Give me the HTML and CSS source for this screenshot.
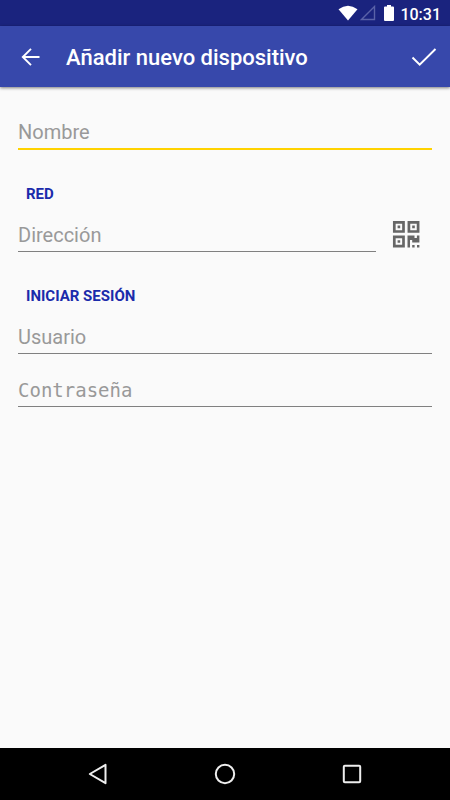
FILE: index.html
```
<!DOCTYPE html>
<html lang="es">
<head>
    <meta charset="UTF-8">
    <meta name="viewport" content="width=device-width, initial-scale=1.0">
    <title>Añadir nuevo dispositivo</title>
    <link rel="stylesheet" href="styles.css">
</head>
<body>
<div class="status">
    <svg width="20" height="16" viewBox="0 0 20 16"><path d="M10 15.5L0.5 4.2Q10 -2.8 19.5 4.2Z" fill="#fff"/></svg>
    <svg width="16" height="16" viewBox="0 0 16 16"><path d="M14.5 1.5V14.5H1.5Z" fill="none" stroke="#5a62a8" stroke-width="1.4"/></svg>
    <svg class="battery" width="10" height="16" viewBox="0 0 10 16"><path d="M3 0h4v1.500h2q1 0 1 1V15q0 1-1 1H1q-1 0-1-1V2.500q0-1 1-1h2z" fill="#fff"/></svg>
    <span class="time">10:31</span>
</div>
<form class="screen">
    <header class="toolbar">
        <button type="button" class="icon-btn" aria-label="Atrás">
            <svg width="20" height="20" viewBox="0 0 20 20"><path d="M18.500 10H2M10 1.800L1.800 10L10 18.200" fill="none" stroke="#fff" stroke-width="1.900"/></svg>
        </button>
        <h1>Añadir nuevo dispositivo</h1>
        <button type="submit" class="icon-btn" aria-label="Guardar">
            <svg width="26" height="20" viewBox="0 0 26 20"><path d="M1.500 10.500L8.700 17.700L24.500 2" fill="none" stroke="#fff" stroke-width="2"/></svg>
        </button>
    </header>
    <main class="content">
        <input type="text" class="field active" placeholder="Nombre" aria-label="Nombre">
        <h2>Red</h2>
        <div class="row">
            <input type="text" class="field" placeholder="Dirección" aria-label="Dirección">
            <button type="button" class="icon-btn" aria-label="Escanear código QR">
                <svg width="28" height="28" viewBox="0 0 28 28" fill="#666">
                    <g fill="none" stroke="#666" stroke-width="2.700">
                        <path d="M2.300 2.300h9.200v9.200H2.300zM16.900 2.300h9.200v9.200h-9.200zM2.300 16.900h9.200v9.200H2.300z"/>
                    </g>
                    <path d="M5.600 5.600h2.600v2.600H5.600zM20.200 5.600h2.600v2.600h-2.600zM5.600 20.200h2.600v2.600H5.600z"/>
                    <path d="M15.500 15.500h7v2.400h2.400v-2.400h2.500v7h-7.200v-2.400h-2.200v7.300h-2.500zM20.200 25h2.400v2.400h-2.400zM25 25h2.400v2.400H25z"/>
                </svg>
            </button>
        </div>
        <h2>Iniciar sesión</h2>
        <input type="text" class="field" placeholder="Usuario" aria-label="Usuario">
        <input type="password" class="field password" placeholder="Contraseña" aria-label="Contraseña">
    </main>
</form>
<nav class="navbar">
    <button type="button" aria-label="Atrás">
        <svg width="22" height="22" viewBox="0 0 22 22"><path d="M18.500 1.800V20.200L2.800 11Z" fill="none" stroke="#eee" stroke-width="2" stroke-linejoin="round"/></svg>
    </button>
    <button type="button" aria-label="Inicio">
        <svg width="22" height="22" viewBox="0 0 22 22"><circle cx="11" cy="11" r="9.200" fill="none" stroke="#eee" stroke-width="2"/></svg>
    </button>
    <button type="button" aria-label="Recientes">
        <svg width="22" height="22" viewBox="0 0 22 22"><rect x="2.800" y="2.800" width="16.400" height="16.400" rx="1" fill="none" stroke="#eee" stroke-width="2"/></svg>
    </button>
</nav>
</body>
</html>
```
FILE: styles.css
```
* {
    box-sizing: border-box;
}
body {
    margin: 0;
    min-height: 100vh;
    display: flex;
    flex-direction: column;
    background: #fafafa;
    font-family: Roboto, "Liberation Sans", sans-serif;
}
button {
    padding: 0;
    border: 0;
    background: none;
}
svg {
    display: block;
}

.status {
    height: 26px;
    padding-right: 9px;
    display: flex;
    align-items: center;
    justify-content: flex-end;
    gap: 2px;
    background: #1a237e;
    color: #fff;
}
.battery {
    margin-left: 6px;
}
.time {
    margin-left: 4px;
    padding-top: 2px;
    font-size: 16px;
    font-weight: 500;
}

.screen {
    flex: 1;
}
.toolbar {
    height: 61px;
    padding: 0 13px 0 21px;
    display: flex;
    align-items: center;
    background: #3748ab;
    box-shadow: 0 1px 3px rgba(0, 0, 0, .5);
}
.toolbar h1 {
    flex: 1;
    margin: 0 0 0 25px;
    padding-top: 2px;
    font-size: 22px;
    font-weight: 500;
    color: #fff;
}

.content {
    padding: 27px 18px;
}
h2 {
    margin: 33px 8px 11px;
    font-size: 15px;
    line-height: 22px;
    font-weight: 700;
    text-transform: uppercase;
    color: #1a2bab;
}
.field {
    display: block;
    width: 100%;
    height: 36px;
    padding: 2px 0 0;
    border: 0;
    border-bottom: 1px solid #808080;
    border-radius: 0;
    outline: none;
    background: none;
    font-family: inherit;
    font-size: 20px;
    color: #212121;
}
.field::placeholder {
    color: #999;
}
.active {
    border-bottom: 2px solid #ffd200;
}
.row {
    display: flex;
    align-items: center;
    gap: 16px;
    padding-right: 12px;
}
.password {
    margin-top: 17px;
    font-family: "DejaVu Sans Mono", monospace;
    font-size: 19px;
}

.navbar {
    height: 52px;
    padding: 0 35px;
    display: flex;
    align-items: center;
    background: #000;
}
.navbar button {
    flex: 1;
    display: flex;
    justify-content: center;
}
```
